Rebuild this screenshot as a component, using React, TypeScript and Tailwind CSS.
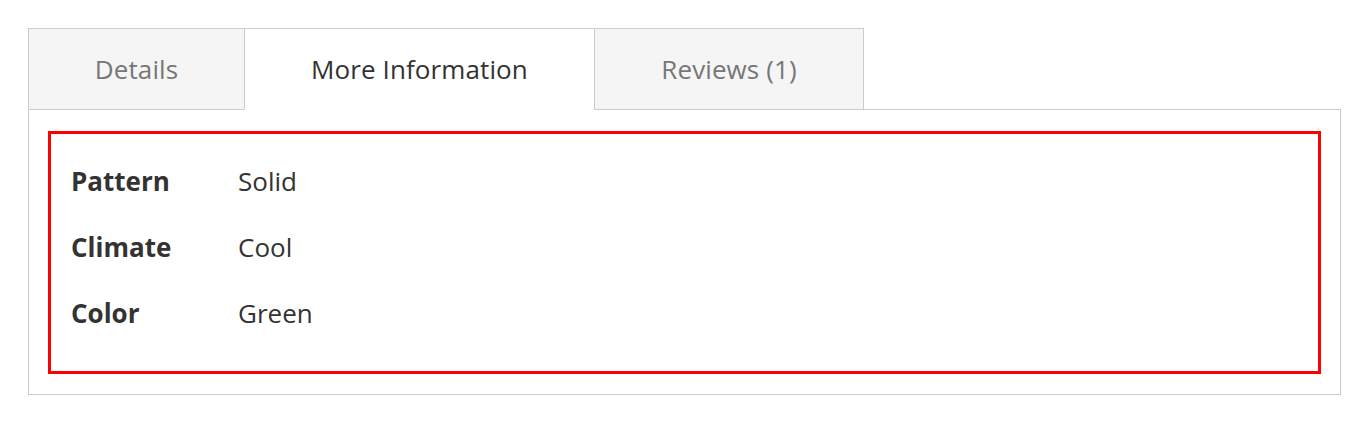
import { useState } from 'react';

const tabs = [
  { id: 'details', label: 'Details', width: 'w-[217px]' },
  { id: 'info', label: 'More Information', width: 'w-[351px]' },
  { id: 'reviews', label: 'Reviews (1)', width: 'w-[270px]' },
];

const attributes = [
  { label: 'Pattern', value: 'Solid' },
  { label: 'Climate', value: 'Cool' },
  { label: 'Color', value: 'Green' },
];

export default function App() {
  const [active, setActive] = useState('info');

  return (
    <div
      className="bg-white min-h-[423px] pt-[28px] pl-[28px] text-[#333]"
      style={{ fontFamily: '"Open Sans", "Noto Sans", sans-serif' }}
    >
      <div className="w-[1313px]">
        {/* Tabs */}
        <div className="flex -mb-px relative z-10">
          {tabs.map((t, i) => (
            <button
              key={t.id}
              onClick={() => setActive(t.id)}
              className={`${t.width} h-[82px] flex items-center justify-center border border-[#ccc] text-[26px] leading-[36px] tracking-[0.1px] ${
                i > 0 ? '-ml-px' : ''
              } ${active === t.id ? 'bg-white border-b-white text-[#333]' : 'bg-[#f5f5f5] text-[#777]'}`}
            >
              {t.label}
            </button>
          ))}
        </div>

        {/* Panel */}
        <div className="border border-[#ccc] h-[286px] px-[19px] pt-[21px]">
          <div className="border-[3px] border-[#ff0000] h-[243px] px-[20px] py-[20px]">
            <table className="text-[26px] leading-[36px]">
              <tbody>
                {attributes.map((a) => (
                  <tr key={a.label}>
                    <th className="w-[167px] text-left font-bold pt-[9px] pb-[21px] align-top">{a.label}</th>
                    <td className="pt-[9px] pb-[21px] align-top">{a.value}</td>
                  </tr>
                ))}
              </tbody>
            </table>
          </div>
        </div>
      </div>
    </div>
  );
}
